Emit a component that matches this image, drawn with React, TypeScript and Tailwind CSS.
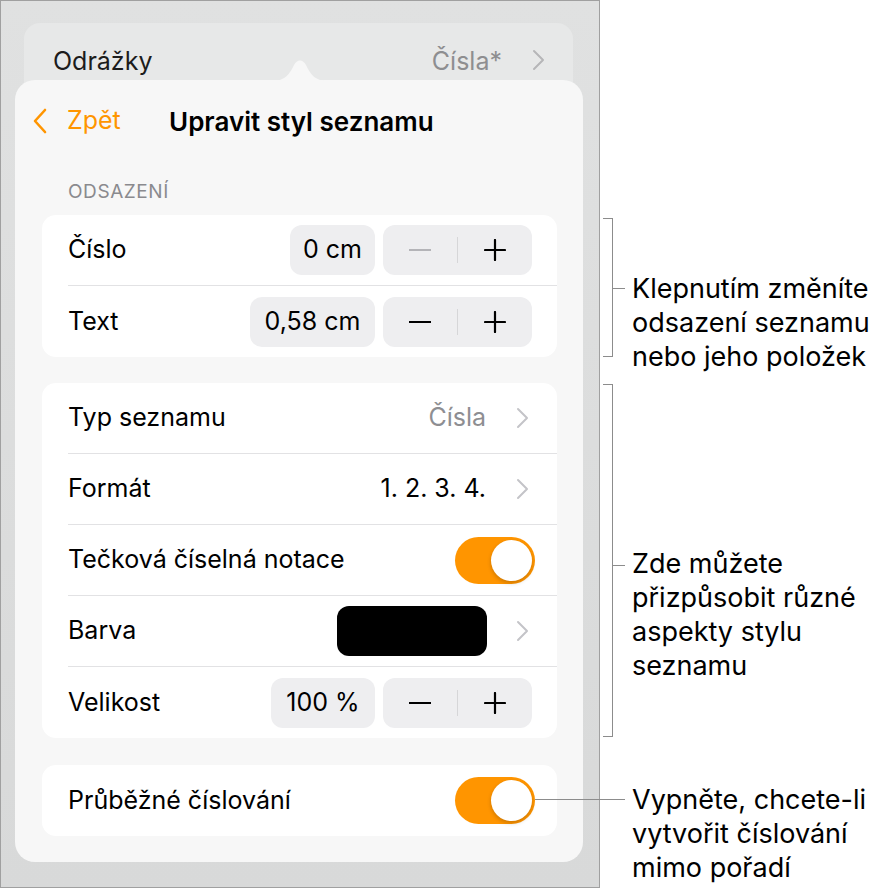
import React from "react";

const font = { fontFamily: "Inter, 'Noto Sans', sans-serif" };

const Chevron = ({ className = "" }: { className?: string }) => (
  <svg width="13" height="22" viewBox="0 0 13 22" className={className}>
    <path d="M2 2 L11 11 L2 20" fill="none" stroke="currentColor" strokeWidth="2" strokeLinecap="round" strokeLinejoin="round" />
  </svg>
);

const Stepper = ({ minusDisabled = false }: { minusDisabled?: boolean }) => (
  <div className="flex items-center w-[149px] h-[50px] rounded-[12px] bg-[#eeeef0]">
    <div className="flex-1 flex justify-center">
      <div className={`w-[22px] h-[2px] ${minusDisabled ? "bg-[#b4b4b8]" : "bg-black"}`} />
    </div>
    <div className="w-px h-[26px] bg-[#d6d6d8]" />
    <div className="flex-1 flex justify-center">
      <svg width="22" height="22" viewBox="0 0 22 22">
        <path d="M11 1 V21 M1 11 H21" stroke="black" strokeWidth="2.2" strokeLinecap="round" />
      </svg>
    </div>
  </div>
);

const ValueBox = ({ value, w }: { value: string; w: string }) => (
  <div className={`${w} h-[50px] rounded-[12px] bg-[#eeeef0] flex items-center justify-center text-[25px] text-black mr-[8px]`}>
    {value}
  </div>
);

const Toggle = () => (
  <div className="w-[80px] h-[47px] rounded-full bg-[#ff9500] flex items-center justify-end pr-[3px]">
    <div className="w-[41px] h-[41px] rounded-full bg-white shadow-[0_2px_4px_rgba(0,0,0,0.2)]" />
  </div>
);

const Row = ({ label, last = false, pr = "pr-[25px]", children }: { label: string; last?: boolean; pr?: string; children?: React.ReactNode }) => (
  <div className="pl-[26px] h-[71px]">
    <div className={`h-full flex items-center ${pr} ${last ? "" : "border-b border-[#e2e2e4]"}`}>
      <span className="text-[25px] text-black flex-1">{label}</span>
      {children}
    </div>
  </div>
);

const Bracket = ({ h, tick, children }: { h: string; tick: string; children: React.ReactNode }) => (
  <div className={`flex ${h}`}>
    <div className={`${h} w-[10px] ml-[3px] border-y border-r border-[#8c8c8c] relative`}>
      <div className={`absolute left-[9px] ${tick} w-[13px] h-px bg-[#8c8c8c]`} />
    </div>
    <div className="ml-[19px] whitespace-nowrap">{children}</div>
  </div>
);

export default function App() {
  return (
    <div className="relative flex items-start w-[888px] h-[894px] bg-white overflow-hidden" style={font}>
      <div className="w-[600px] h-[888px] border border-[#a0a0a0] bg-gradient-to-b from-[#e0e1e1] to-[#d8d9d9]">
        <div className="ml-[23px] mt-[22px] w-[549px] h-[80px] rounded-[16px] bg-[#e7e8e8] flex items-start pt-[20px] pl-[29px] pr-[28px]">
          <span className="text-[25px] text-[#1c1c1c] flex-1">Odrážky</span>
          <span className="text-[25px] text-[#8e8e90] mr-[30px]">Čísla*</span>
          <Chevron className="text-[#b6b6b8] mt-[6px]" />
        </div>
        <div className="relative z-10 -mt-[23px] ml-[14px] w-[568px] h-[782px] rounded-[20px] bg-[#f7f7f7]">
          <svg className="absolute -top-[23px] left-[255px]" width="60" height="24" viewBox="0 0 60 24">
            <path d="M0 24 C14 24 18 20 24 8 C27 2 33 2 36 8 C42 20 46 24 60 24 Z" fill="#f7f7f7" />
          </svg>
          <div className="h-[82px] flex items-center pl-[18px]">
            <svg width="14" height="26" viewBox="0 0 14 26" className="mr-[20px]">
              <path d="M12 2 L2 13 L12 24" fill="none" stroke="#ff9500" strokeWidth="2.6" strokeLinecap="round" strokeLinejoin="round" />
            </svg>
            <span className="text-[25px] text-[#ff9500] w-[102px]">Zpět</span>
            <span className="text-[26px] font-semibold text-black">Upravit styl seznamu</span>
          </div>
          <div className="mt-[20px] h-[20px] pl-[53px] text-[19px] leading-[20px] text-[#8a8a8e] tracking-[0.03em]">ODSAZENÍ</div>
          <div className="mt-[13px] ml-[27px] w-[515px] rounded-[14px] bg-white">
            <Row label="Číslo">
              <ValueBox value="0 cm" w="w-[85px]" />
              <Stepper minusDisabled />
            </Row>
            <Row label="Text" last>
              <ValueBox value="0,58 cm" w="w-[125px]" />
              <Stepper />
            </Row>
          </div>
          <div className="mt-[26px] ml-[27px] w-[515px] rounded-[14px] bg-white">
            <Row label="Typ seznamu" pr="pr-[28px]">
              <span className="text-[25px] text-[#8e8e92] mr-[30px]">Čísla</span>
              <Chevron className="text-[#c4c4c8]" />
            </Row>
            <Row label="Formát" pr="pr-[28px]">
              <span className="text-[25px] text-black mr-[30px]">1. 2. 3. 4.</span>
              <Chevron className="text-[#c4c4c8]" />
            </Row>
            <Row label="Tečková číselná notace" pr="pr-[22px]">
              <Toggle />
            </Row>
            <Row label="Barva" pr="pr-[28px]">
              <div className="w-[150px] h-[50px] rounded-[12px] bg-black mr-[29px]" />
              <Chevron className="text-[#c4c4c8]" />
            </Row>
            <Row label="Velikost" last>
              <ValueBox value="100 %" w="w-[104px]" />
              <Stepper />
            </Row>
          </div>
          <div className="mt-[27px] ml-[27px] w-[515px] rounded-[14px] bg-white">
            <Row label="Průběžné číslování" last pr="pr-[22px]">
              <Toggle />
            </Row>
          </div>
        </div>
      </div>

      <div className="flex flex-col pt-[218px] text-[27px] leading-[34px] text-black">
        <Bracket h="h-[139px]" tick="top-[69px]">
          <div className="pt-[54px]">
            Klepnutím změníte
            <br />
            odsazení seznamu
            <br />
            nebo jeho položek
          </div>
        </Bracket>
        <div className="h-[27px]" />
        <Bracket h="h-[353px]" tick="top-[180px]">
          <div className="pt-[163px]">
            Zde můžete
            <br />
            přizpůsobit různé
            <br />
            aspekty stylu
            <br />
            seznamu
          </div>
        </Bracket>
        <div className="pl-[32px] pt-[46px] whitespace-nowrap">
          Vypněte, chcete-li
          <br />
          vytvořit číslování
          <br />
          mimo pořadí
        </div>
      </div>
      <div className="absolute left-[535px] top-[799px] w-[90px] h-px bg-[#8c8c8c] z-20" />
    </div>
  );
}
